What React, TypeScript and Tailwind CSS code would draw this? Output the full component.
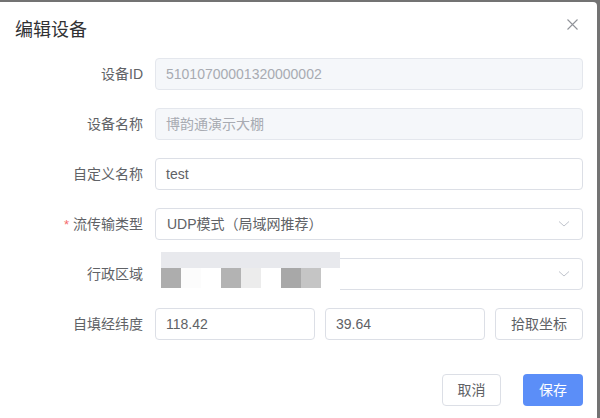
import React from "react";

/* ======================================================
   SMALL PIECES
====================================================== */

const FONT = {
  fontFamily:
    '"Liberation Sans", "Noto Sans CJK SC", "Noto Sans", sans-serif',
};

function Chevron() {
  return (
    <svg width="12" height="8" viewBox="0 0 12 8" className="text-[#c0c4cc]">
      <path d="M1 1.5 L6 6 L11 1.5" fill="none" stroke="currentColor" strokeWidth="1" />
    </svg>
  );
}

type RowProps = {
  label: string;
  required?: boolean;
  children: React.ReactNode;
};

function Row({ label, required, children }: RowProps) {
  return (
    <div className="flex items-center h-[32px]">
      <label className="w-[155px] shrink-0 pr-[12px] text-right text-[14px] text-[#606266]">
        {required && <span className="text-[#f56c6c] mr-[4px] text-[13px]">*</span>}
        {label}
      </label>
      <div className="flex-1 h-full">{children}</div>
    </div>
  );
}

function Input({ value, disabled }: { value: string; disabled?: boolean }) {
  return (
    <div
      className={
        disabled
          ? "h-full rounded-[4px] border border-[#e4e7ed] bg-[#f5f7fa] text-[#a8abb2] px-[10px] flex items-center text-[14px]"
          : "h-full rounded-[4px] border border-[#dcdfe6] bg-white text-[#606266] px-[10px] flex items-center text-[14px]"
      }
    >
      {value}
    </div>
  );
}

function Select({ value }: { value: string }) {
  return (
    <div className="h-full rounded-[4px] border border-[#dcdfe6] bg-white text-[#606266] pl-[11px] pr-[12px] flex items-center justify-between text-[14px]">
      <span>{value}</span>
      <Chevron />
    </div>
  );
}

/* ======================================================
   COMPONENT
====================================================== */

export default function App() {
  return (
    <div className="w-[600px] h-[418px] bg-[#737373] pt-[2px] overflow-hidden" style={FONT}>
      <div className="w-[597px] h-[416px] bg-white rounded-tr-[4px] flex flex-col">
        {/* HEADER */}
        <div className="flex items-center justify-between pl-[15px] pr-[19px] pt-[16px] h-[40px]">
          <h2 className="text-[18px] leading-[24px] text-[#303133]">编辑设备</h2>
          <svg width="11" height="11" viewBox="0 0 11 11" className="text-[#909399] -mt-[12px]">
            <path d="M0.5 0.5 L10.5 10.5 M10.5 0.5 L0.5 10.5" stroke="currentColor" strokeWidth="1.1" />
          </svg>
        </div>

        {/* FORM */}
        <div className="flex flex-col gap-[18px] pt-[16px] pr-[14px]">
          <Row label="设备ID">
            <Input value="51010700001320000002" disabled />
          </Row>
          <Row label="设备名称">
            <Input value="博韵通演示大棚" disabled />
          </Row>
          <Row label="自定义名称">
            <Input value="test" />
          </Row>
          <Row label="流传输类型" required>
            <Select value="UDP模式（局域网推荐）" />
          </Row>
          <Row label="行政区域">
            <div className="relative h-full">
              <Select value="" />
              {/* mosaic over the value */}
              <div className="absolute left-0 -top-[6px] w-[185px] h-[38px] bg-white flex flex-col pl-[6px]">
                <div className="h-[16px] bg-[#e8e9ed]" />
                <div className="flex h-[20px]">
                  <div className="w-[20px] bg-[#adadad]" />
                  <div className="w-[20px] bg-[#fcfcfc]" />
                  <div className="w-[20px] bg-white" />
                  <div className="w-[20px] bg-[#b3b3b3]" />
                  <div className="w-[20px] bg-[#ececec]" />
                  <div className="w-[20px] bg-white" />
                  <div className="w-[20px] bg-[#a8a8a8]" />
                  <div className="w-[20px] bg-[#c5c5c5]" />
                </div>
              </div>
            </div>
          </Row>
          <Row label="自填经纬度">
            <div className="flex h-full gap-[10px]">
              <div className="w-[160px] h-full">
                <Input value="118.42" />
              </div>
              <div className="w-[160px] h-full">
                <Input value="39.64" />
              </div>
              <button className="flex-1 h-full rounded-[4px] border border-[#dcdfe6] bg-white text-[#606266] text-[14px]">
                拾取坐标
              </button>
            </div>
          </Row>
        </div>

        {/* FOOTER */}
        <div className="flex justify-end gap-[22px] pr-[14px] pt-[34px]">
          <button className="w-[59px] h-[32px] rounded-[4px] border border-[#dcdfe6] bg-white text-[#606266] text-[14px]">
            取消
          </button>
          <button className="w-[60px] h-[32px] rounded-[4px] bg-[#5b8ef8] text-white text-[14px]">
            保存
          </button>
        </div>
      </div>
    </div>
  );
}
